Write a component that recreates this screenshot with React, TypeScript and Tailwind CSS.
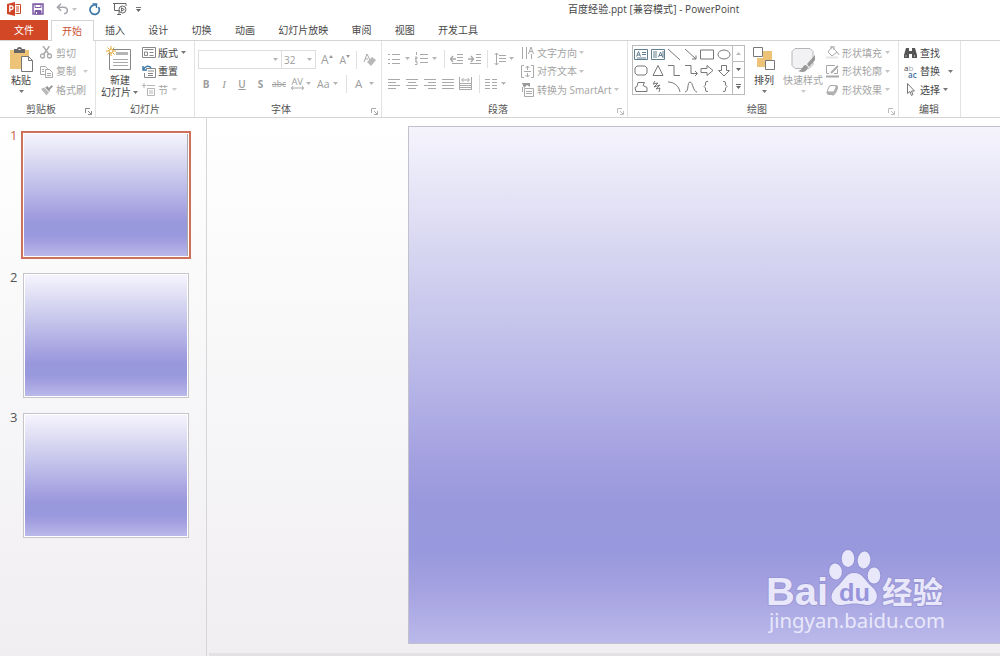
import type { ReactNode } from "react";
import clsx from "clsx";

interface childProps {
  children?: ReactNode;
  className?: string;
}
interface iconProps {
  w?: number;
  h?: number;
  color?: string;
  className?: string;
  children: ReactNode;
}
interface groupProps {
  label: string;
  className: string;
  labelClass?: string;
  launcher?: string;
  children: ReactNode;
}
interface rowProps {
  icon: ReactNode;
  label: string;
  className?: string;
  arrow?: string;
}

const GRAY = "#a9a9a9";
const DARK = "#555555";

const tabs = ["插入", "设计", "切换", "动画", "幻灯片放映", "审阅", "视图", "开发工具"];

function Icon({ w = 14, h = 14, color = GRAY, className, children }: iconProps) {
  return (
    <svg
      width={w}
      height={h}
      viewBox={`0 0 ${w} ${h}`}
      fill="none"
      stroke={color}
      strokeWidth={1}
      className={clsx("shrink-0", className)}
    >
      {children}
    </svg>
  );
}

function Arrow({ className = "text-[#b5b5b5]" }: childProps) {
  return (
    <svg width="5" height="3" viewBox="0 0 5 3" className={clsx("shrink-0", className)}>
      <path d="M0 0h5L2.500 3z" fill="currentColor" />
    </svg>
  );
}

function Sep({ className }: childProps) {
  return <div className={clsx("h-[18px] w-px shrink-0 bg-[#e0e0e0]", className)} />;
}

function Group({ label, className, labelClass, launcher, children }: groupProps) {
  return (
    <section className={clsx("flex shrink-0 flex-col", className)}>
      <div className="flex h-[61px] border-r border-[#e3e3e3]">{children}</div>
      <div className="flex h-[15px] items-center justify-between border-r border-[#e3e3e3]">
        <span className={clsx("leading-[15px] text-[#555]", labelClass)}>{label}</span>
        {launcher && (
          <Icon w={7} h={7} color={launcher} className="mr-[3px] mt-[3px]">
            <path d="M.5 5V.5H5M3 3l3 3M6.500 3v3.500H3" />
          </Icon>
        )}
      </div>
    </section>
  );
}

// one line of the three-line button columns
function Row({ icon, label, className = "text-[#a3a3a3]", arrow }: rowProps) {
  return (
    <div className={clsx("flex h-[18.600px] items-center whitespace-nowrap", className)}>
      <span className="flex w-4 shrink-0 items-center">{icon}</span>
      <span>{label}</span>
      {arrow && <Arrow className={arrow} />}
    </div>
  );
}

function Lines({ d }: { d: string }) {
  return (
    <Icon w={13} h={12}>
      <path d={d} />
    </Icon>
  );
}

function TitleBar() {
  return (
    <header className="flex h-5 items-center pb-[2px]">
      <Icon w={14} h={14} color="none" className="ml-[7px]">
        <path d="M0 2l8-2v14l-8-2z" fill="#cf4527" />
        <path d="M8.500 2.500h5v9h-5" stroke="#cf4527" />
        <path d="M9 5h3M9 7h3M9 9h3" stroke="#cf4527" />
        <path d="M2.800 10V4h1.500a1.700 1.700 0 010 3.500H3" stroke="#fff" strokeWidth="1.300" />
      </Icon>
      <Icon w={12} h={12} color="#7d5ba6" className="ml-[11px]">
        <path d="M1 1h10v10H1z" strokeWidth="1.500" />
        <path d="M3 1.500h6v3H3z" fill="#fff" />
        <path d="M3 7.500h6V11H3z" fill="#7d5ba6" />
        <path d="M4.500 9v2" stroke="#fff" />
      </Icon>
      <Icon w={13} h={12} color="#a6a6ae" className="ml-3">
        <path d="M5 .8L1.500 4.200 5 7.600M2 4.200h5.500c5 0 5 6.300.5 6.500" strokeWidth="1.600" />
      </Icon>
      <Arrow className="ml-[3px] text-[#c4c4c4]" />
      <Icon w={13} h={13} color="#3c77a8" className="ml-[11px]">
        <path d="M8 2.200A4.700 4.700 0 1010.500 4" strokeWidth="1.700" />
        <path d="M4.500 1h4v4" strokeWidth="1.400" />
      </Icon>
      <Icon w={15} h={14} color="#666" className="ml-3">
        <path d="M0 1.500h13M1.500 1.500v7h5M4 12.500h4M6 9v3.500M13 1.500V4" />
        <circle cx="9.500" cy="7.500" r="3.500" fill="#fff" />
        <path d="M8.500 5.800v3.400l2.800-1.700z" />
      </Icon>
      <div className="ml-[8px] flex flex-col items-center gap-px">
        <div className="h-px w-[5px] bg-[#777]" />
        <Arrow className="text-[#666]" />
      </div>
      <h1 className="ml-[427px] whitespace-nowrap text-[10px] tracking-[0.060px] text-[#444]">
        百度经验.ppt [兼容模式] - PowerPoint
      </h1>
    </header>
  );
}

function Tabs() {
  return (
    <nav className="flex h-[21px] border-b border-[#d5d5d5]">
      <div className="flex w-12 items-center justify-center bg-[#d24726] text-white">文件</div>
      <div className="ml-[3px] flex h-[21px] w-[43px] items-center justify-center border border-b-0 border-[#d5d5d5] bg-white pr-px text-[#c8502f]">
        开始
      </div>
      <div className="ml-[11px] flex items-center gap-[23.300px] text-[#484848]">
        {tabs.map((tab) => (
          <span key={tab} className="whitespace-nowrap">
            {tab}
          </span>
        ))}
      </div>
    </nav>
  );
}

function Clipboard() {
  return (
    <Group label="剪贴板" className="w-24" labelClass="ml-[26px]" launcher="#888">
      <div className="ml-[8px] flex w-[26px] flex-col items-center pt-[6px]">
        <Icon w={26} h={26} color="none">
          <path d="M2 3h19v19H2z" fill="#edc477" />
          <path d="M6 2h3a2.500 2 0 015 0h3v4H6z" fill="#666" />
          <path d="M10.500 2h2v1h-2z" fill="#fff" />
          <path d="M13.500 9.500h7l4 4v11h-11z" fill="#fff" stroke="#777" />
          <path d="M20.500 9.500v4h4" stroke="#777" />
        </Icon>
        <span className="leading-[15px] text-[#444]">粘贴</span>
        <Arrow className="mt-[2px] text-[#777]" />
      </div>
      <div className="ml-[6px] flex flex-col pt-[2.500px]">
        <Row
          label="剪切"
          icon={
            <Icon w={13} h={13}>
              <path d="M3 0l6 8.500M9.500 0l-6 8.500" strokeWidth="1.400" />
              <circle cx="2.500" cy="10" r="2" strokeWidth="1.300" />
              <circle cx="9.500" cy="10" r="2" strokeWidth="1.300" />
            </Icon>
          }
        />
        <Row
          label="复制"
          arrow="ml-[7px] text-[#ccc]"
          icon={
            <Icon w={13} h={13}>
              <path d="M.5 1.500h5l2 2v6h-7z" />
              <path d="M5.500 4.500h4l3 3v5h-7z" fill="#fff" />
              <path d="M2 4.500h2M2 6.500h2M7 8.500h4M7 10.500h4" />
            </Icon>
          }
        />
        <Row
          label="格式刷"
          icon={
            <Icon w={13} h={12} color="none">
              <path d="M1 5l3-1.500 5 5-2.500 3z" fill="#b9b9b9" />
              <path d="M5 3.500L7.500 2l1.500 2 2.500-3 1.500 1.500L10 5.500l-.5 2.500z" fill="#999" />
            </Icon>
          }
        />
      </div>
    </Group>
  );
}

function Slides() {
  return (
    <Group label="幻灯片" className="w-[99px]" labelClass="ml-[34px]">
      <div className="ml-[5px] flex w-10 flex-col pt-[5px]">
        <Icon w={27} h={26} color={DARK} className="ml-[5px]">
          <path d="M3.500 3.500h21v20h-21z" fill="#fff" stroke="#888" />
          <path d="M10 7.500h12" stroke="#b5b5b5" strokeWidth="3" />
          <path d="M7 13.500h15M7 16.500h15M7 19.500h15" stroke="#aaa" />
          <path d="M5 0v10M0 5h10M1.500 1.500l7 7M8.500 1.500l-7 7" stroke="#e5a93b" />
          <circle cx="5" cy="5" r="2" fill="#fff" stroke="#e5a93b" />
        </Icon>
        <span className="ml-[9px] mt-px leading-[14px] text-[#444]">新建</span>
        <div className="flex items-center whitespace-nowrap leading-[11px] text-[#444]">
          幻灯片
          <Arrow className="ml-[2px] text-[#777]" />
        </div>
      </div>
      <div className="ml-px flex flex-col pt-[2.500px]">
        <Row
          label="版式"
          className="text-[#444]"
          arrow="ml-[3px] text-[#777]"
          icon={
            <Icon w={14} h={13} color="#888">
              <path d="M.5 1.500h13v10H.5zM2.500 3.500h9M2.500 6h3v3.500h-3zM7.500 6.500h4M7.500 9.500h4" />
            </Icon>
          }
        />
        <Row
          label="重置"
          className="text-[#444]"
          icon={
            <Icon w={14} h={13} color="#888">
              <path d="M4 3.500h9.500v9h-11V8M6 6h6M6 8.500h5M6 10.500h5" />
              <path d="M1 1v4h4M1.500 4.500C2.500 1 7 0 9 3" stroke="#3c77a8" strokeWidth="1.400" />
            </Icon>
          }
        />
        <Row
          label="节"
          arrow="ml-[4px] text-[#ccc]"
          icon={
            <Icon w={14} h={13} color="#b5b5b5">
              <path d="M5 2.500h8M5.500 5.500h7v7h-7zM7 8h4M7 10h4M2 0v5M0 2.500h4" />
            </Icon>
          }
        />
      </div>
    </Group>
  );
}

function FontGroup() {
  return (
    <Group label="字体" className="w-[187px]" labelClass="ml-[76px]" launcher="#aaa">
      <div className="ml-[3px] flex flex-col pt-[9px] text-[#9d9d9d]">
        <div className="flex h-[19px] items-center">
          <div className="flex h-[19px] w-[84px] items-center justify-end border border-[#ddd] pr-[3px]">
            <Arrow />
          </div>
          <div className="-ml-px flex h-[19px] w-[35px] items-center justify-between border border-[#ddd] pl-[2px] pr-[3px] text-[10px]">
            32
            <Arrow />
          </div>
          <span className="ml-[5px] text-[12px]">A</span>
          <Icon w={5} h={12} color="none">
            <path d="M0 4l2-3 2 3z" fill="#999" />
          </Icon>
          <span className="ml-[6px] text-[10.500px]">A</span>
          <Icon w={5} h={12} color="none">
            <path d="M0 1h4L2 4z" fill="#999" />
          </Icon>
          <Sep className="ml-[5px]" />
          <Icon w={14} h={14} className="ml-[6px]">
            <path d="M1 9l3-8 3 6M2 6h3" />
            <path d="M4 9l5-5 4 3-5 6z" fill="#b8b8b8" stroke="none" />
          </Icon>
        </div>
        <div className="-ml-px mt-[5px] flex h-[19px] items-center">
          <span className="w-[18px] text-center font-bold">B</span>
          <span className="w-[18px] text-center font-['Liberation_Serif'] text-[11px] italic">I</span>
          <span className="w-[18px] text-center font-semibold underline">U</span>
          <span className="w-[19px] text-center font-bold">S</span>
          <span className="w-[18px] text-center text-[8.500px] line-through">abc</span>
          <span className="flex w-[18px] flex-col items-center text-[9.500px] leading-[9px] tracking-tight">
            AV
            <Icon w={13} h={4}>
              <path d="M0 2h13M2 0L.5 2 2 4M11 0l1.500 2L11 4" />
            </Icon>
          </span>
          <Arrow />
          <span className="ml-[6px] w-4 text-[10.500px]">Aa</span>
          <Arrow />
          <Sep className="ml-[8px]" />
          <span className="ml-[8px] w-[14px] text-[11.500px]">A</span>
          <Arrow />
        </div>
      </div>
    </Group>
  );
}

function Paragraph() {
  return (
    <Group label="段落" className="w-[246px]" labelClass="ml-[106px]" launcher="#bbb">
      <div className="ml-[6px] flex w-[133px] flex-col pt-[8px]">
        <div className="flex h-[19px] items-center">
          <Lines d="M4 1.500h8M4 6.500h8M4 10.500h8M0 1.500h2M0 6.500h2M0 10.500h2" />
          <Arrow className="ml-[4px] text-[#b5b5b5]" />
          <Icon w={13} h={13} className="ml-[5px]">
            <path d="M5 2.500h8M5 6.500h8M5 10.500h8M1.500 0v3M0 5h2v1.500H0V8h2M0 9.500h2v3H0" />
          </Icon>
          <Arrow className="ml-[4px] text-[#b5b5b5]" />
          <Sep className="ml-[7px]" />
          <Icon w={14} h={12} className="ml-[5px]">
            <path d="M7 1.500h6M7 4.500h6M7 7.500h6M2 10.500h11" />
            <path d="M0 6h6M3 3L.5 6 3 9" strokeWidth="1.400" />
          </Icon>
          <Icon w={14} h={12} className="ml-[4px]">
            <path d="M8 1.500h5M8 4.500h5M8 7.500h5M2 10.500h11" />
            <path d="M0 6h6M3 3l2.500 3L3 9" strokeWidth="1.400" />
          </Icon>
          <Sep className="ml-[5px]" />
          <Icon w={12} h={14} className="ml-[6px]">
            <path d="M5 3.500h7M5 6.500h7M5 9.500h7M2.500 1v12M.5 3l2-2 2 2M.5 11l2 2 2-2" />
          </Icon>
          <Arrow className="ml-[3px] text-[#b5b5b5]" />
        </div>
        <div className="mt-[6px] flex h-[19px] items-center">
          <div className="flex shrink-0 items-center gap-[5px]">
            <Lines d="M0 1.500h12M0 4.500h8M0 7.500h12M0 10.500h8" />
            <Lines d="M0 1.500h12M2 4.500h8M0 7.500h12M2 10.500h8" />
            <Lines d="M0 1.500h12M4 4.500h8M0 7.500h12M4 10.500h8" />
            <Lines d="M0 1.500h12M0 4.500h12M0 7.500h12M0 10.500h12" />
            <Icon w={14} h={14} className="-ml-px">
              <path d="M.5 0v13M12.500 0v13M3 3h7M4.500 1L2.500 3l2 2M8.500 1l2 2-2 2M1 6.500h12M1 8.500h12M1 10.500h12M1 12.500h12" />
            </Icon>
          </div>
          <Sep className="ml-[6px]" />
          <Icon w={12} h={12} className="ml-[5px]">
            <path d="M0 1.500h5M7 1.500h5M0 4.500h5M7 4.500h5M0 7.500h5M7 7.500h5M0 10.500h5M7 10.500h5" />
          </Icon>
          <Arrow className="ml-[4px] text-[#b5b5b5]" />
        </div>
      </div>
      <div className="flex flex-col pt-[2.500px]">
        <Row
          label="文字方向"
          arrow="ml-[2px] text-[#c4c4c4]"
          icon={
            <Icon w={14} h={13}>
              <path d="M1.500 1v12M5.500 1v12M10.500 8v5M7.500 8l2.500-7 2.500 7M8.500 5.500h3" />
            </Icon>
          }
        />
        <Row
          label="对齐文本"
          arrow="ml-[2px] text-[#c4c4c4]"
          icon={
            <Icon w={14} h={13}>
              <path d="M3 .5H.5v12H3M10 .5h2.500v12H10M3 6.500h7M6.500 1v4M4.500 3l2-2 2 2M6.500 8v4M4.500 10l2 2 2-2" />
            </Icon>
          }
        />
        <Row
          label="转换为 SmartArt"
          arrow="ml-[2px] text-[#c4c4c4]"
          icon={
            <Icon w={14} h={14}>
              <path d="M1 0h8v4l-3-2-3 3z" fill="#999" stroke="none" />
              <path d="M3.500 5.500h9v8h-9zM5 8.500h6M5 10.500h6M1.500 4v5" />
            </Icon>
          }
        />
      </div>
    </Group>
  );
}

const shapes = [
  "M.5 1.500h13v10H.5zM2.500 8.500l2-5 2 5M3 7h3M8 4.500h4M8 6.500h4M3 10h9",
  "M.5 1.500h13v10H.5zM3 3v7M5 3v7M7.500 9l2-5 2 5M8 7.500h3M12 3v7",
  "M1 1l12 11",
  "M1 1l11 10M12 7.500V11H8",
  "M.5 2h13v9H.5z",
  "M1 6.500a6 4.500 0 1012 0a6 4.500 0 10-12 0z",
  "M3 2h8l2 2v5l-2 2H3L1 9V4z",
  "M7 1.500L12 11.500H2z",
  "M1 1.500h6v10h6",
  "M1 1.500h6v8h6M11 7l2.500 2.500L11 12",
  "M1 4.500h6v-3l6 5-6 5v-3H1z",
  "M4.500 1.500h5v5h3L7 12 1.500 6.500h3z",
  "M2 11.500l-1-4 2-1 1-4h6.500L9 5.500l4 2v4z",
  "M4 1L2 4l5-1-4 4 6-2-4 4 4-1-1 4",
  "M1 2c6 0 11 4 12 10",
  "M1 12C5 12 3 2 6 2s3 10 7 10",
  "M8 1.500H7Q5.500 1.500 5.500 3V5L4 6.500 5.500 8v2Q5.500 11.500 7 11.500H8",
  "M6 1.500H7Q8.500 1.500 8.500 3V5L10 6.500 8.500 8v2Q8.500 11.500 7 11.500H6",
];

function Drawing() {
  return (
    <Group label="绘图" className="w-[271px]" labelClass="ml-[119px]" launcher="#bbb">
      <div className="ml-[4px] mt-[4px] flex h-[50px] w-[113px] shrink-0 border border-[#bbb]">
        <div className="grid w-[99px] grid-cols-6 grid-rows-3 place-items-center">
          {shapes.map((d, i) => (
            <Icon key={i} w={14} h={13} color={i < 2 ? "#62808f" : "#777"}>
              <path d={d} />
            </Icon>
          ))}
        </div>
        <div className="grid w-[12px] grid-rows-3 divide-y divide-[#bbb] border-l border-[#bbb]">
          <div className="grid place-items-center">
            <Arrow className="rotate-180 text-[#bbb]" />
          </div>
          <div className="grid place-items-center">
            <Arrow className="text-[#666]" />
          </div>
          <div className="flex flex-col items-center justify-center gap-px">
            <div className="h-px w-[5px] bg-[#666]" />
            <Arrow className="text-[#666]" />
          </div>
        </div>
      </div>
      <div className="ml-[7px] flex w-6 flex-col items-center pt-[6px]">
        <Icon w={23} h={24} color="#777">
          <path d="M10 4h9v9h-9zM4 11h9v9H4z" fill="#edc477" stroke="none" />
          <path d="M.5.5h9v9h-9zM12.500 13.500h9v9h-9z" fill="#fff" />
        </Icon>
        <span className="mt-[2px] leading-[15px] text-[#444]">排列</span>
        <Arrow className="mt-[2px] text-[#777]" />
      </div>
      <div className="ml-[6px] flex w-[42px] flex-col items-center whitespace-nowrap pt-[6px]">
        <Icon w={26} h={26} color="#b5b5b5">
          <path d="M5 1.500h15l3 3v13l-4 4H5l-3-3v-14z" fill="#f2f2f5" />
          <path d="M25 8l-8 9 2 3 6-7zM16 18c-4 0-3 5-8 6 5 2 9 1 10-4z" fill="#999" stroke="none" />
        </Icon>
        <span className="leading-[15px] text-[#a3a3a3]">快速样式</span>
        <Arrow className="mt-[2px] text-[#ccc]" />
      </div>
      <div className="ml-[2px] flex flex-col pt-[2.500px]">
        <Row
          label="形状填充"
          arrow="ml-[3px] text-[#c4c4c4]"
          icon={
            <Icon w={14} h={13}>
              <path d="M6 1L2 6l4 4 5-4zM5 3V0h3v4M11 6l2 3" />
              <path d="M0 11.500h12" stroke="#e5e5e5" strokeWidth="2" />
            </Icon>
          }
        />
        <Row
          label="形状轮廓"
          arrow="ml-[3px] text-[#c4c4c4]"
          icon={
            <Icon w={14} h={13}>
              <path d="M9 .5H.5v8H3M11.500 4v4.500H8" />
              <path d="M5 8l7-7" strokeWidth="2" />
              <path d="M0 11.500h13" strokeWidth="2" />
            </Icon>
          }
        />
        <Row
          label="形状效果"
          arrow="ml-[3px] text-[#c4c4c4]"
          icon={
            <Icon w={14} h={12}>
              <path d="M5 1.500h5q2 0 1.500 2.500T9 9.500t-3 1H3q-2.500 0-2-2.500z" fill="#b5b5b5" />
              <path d="M5 1.500h3.500q2 0 1.500 2L8.500 6.500q-.5 1.500-2 1.500H3q-2 0-1.500-1.500L3 3q.5-1.500 2-1.500z" fill="#fff" />
            </Icon>
          }
        />
      </div>
    </Group>
  );
}

function Editing() {
  return (
    <Group label="编辑" className="w-[62px]" labelClass="ml-[20px]">
      <div className="ml-[5px] flex flex-col pt-[2.500px]">
        <Row
          label="查找"
          className="text-[#444]"
          icon={
            <Icon w={13} h={12} color="none">
              <path d="M2 1h3v3h3V1h3l2 7v3H8V7H5v4H0V8z" fill="#555" />
              <path d="M2 8v2M10.500 8v2" stroke="#aaa" />
            </Icon>
          }
        />
        <Row
          label="替换"
          className="text-[#444]"
          arrow="ml-[8px] text-[#777]"
          icon={
            <span className="flex flex-col text-[8px] leading-[7px]">
              <span>
                a<span className="text-[#aaa]">b</span>
              </span>
              <span className="pl-1 font-semibold text-[#3c6f9a]">ac</span>
            </span>
          }
        />
        <Row
          label="选择"
          className="text-[#444]"
          arrow="ml-[3px] text-[#777]"
          icon={
            <Icon w={13} h={13} color="#777">
              <path d="M3.500.5v10l2.500-2 1.500 4 1.500-1-1.500-3.500h3z" fill="#fff" />
            </Icon>
          }
        />
      </div>
    </Group>
  );
}

function SlideFill({ className }: childProps) {
  return (
    <div
      className={clsx(
        "bg-[linear-gradient(180deg,#f5f4fd_0%,#e5e4f6_13%,#d2d1ef_28%,#b6b5e7_50%,#a4a1e0_64%,#9998dd_73%,#9798dd_82%,#a4a1e0_89%,#bab9ea_100%)]",
        className,
      )}
    />
  );
}

function Thumbnails() {
  return (
    <aside className="flex w-[207px] shrink-0 flex-col border-r border-[#d6d5d8] pt-[13px] text-[13px] leading-[8px] text-[#555]">
      <div className="flex h-[142px]">
        <span className="w-[21px] pl-[10px] text-[#c8654a]">1</span>
        <div className="h-[128px] w-[170px] border-2 border-[#d0705a] bg-white p-px">
          <SlideFill className="h-full w-full border-r border-[#aaa]" />
        </div>
      </div>
      {[2, 3].map((n) => (
        <div key={n} className="flex h-[140px]">
          <span className="w-[23px] pl-[10px]">{n}</span>
          <div className="h-[125px] w-[166px] border border-[#c6c5cc] bg-white p-px">
            <SlideFill className="h-full w-full" />
          </div>
        </div>
      ))}
    </aside>
  );
}

function Watermark() {
  return (
    <svg width="190" height="92" viewBox="0 0 190 92" fill="#e9e8fa" className="absolute bottom-[7px] right-[54px]">
      <g stroke="#8785c5" strokeOpacity=".4" strokeWidth="2" paintOrder="stroke">
        <ellipse cx="79.500" cy="26.500" rx="6.300" ry="8" transform="rotate(-8 79.500 26.500)" />
        <ellipse cx="92" cy="13.500" rx="6.300" ry="8.500" />
        <ellipse cx="108" cy="15" rx="6.300" ry="8.500" transform="rotate(8 108 15)" />
        <ellipse cx="118" cy="30.500" rx="6.300" ry="8" />
        <path d="M98 28c9 0 11 8 17 13 11 9 5 20-5 19-8-2-15-2-23 0-11 1-16-9-6-18 7-6 9-14 17-14z" />
        <text x="10" y="59.500" fontSize="38" fontWeight="700" textLength="62" lengthAdjust="spacingAndGlyphs" fontFamily="Liberation Sans, sans-serif">
          Bai
        </text>
        <text x="126" y="58" fontSize="30" fontWeight="700" textLength="61" lengthAdjust="spacingAndGlyphs" fontFamily="Noto Sans CJK SC, sans-serif">
          经验
        </text>
      </g>
      <text x="83" y="56" fontSize="23" fontWeight="700" fill="#9795dc" textLength="31" lengthAdjust="spacingAndGlyphs" fontFamily="Liberation Sans, sans-serif">
        du
      </text>
      <text x="13" y="83" fontSize="20" textLength="176" lengthAdjust="spacingAndGlyphs" fontFamily="Noto Sans, sans-serif">
        jingyan.baidu.com
      </text>
    </svg>
  );
}

export default function App() {
  return (
    <div className="flex h-[656px] w-[1000px] flex-col overflow-hidden bg-white font-['Open_Sans','Noto_Sans_CJK_SC',sans-serif] text-[10px] leading-[14px]">
      <TitleBar />
      <Tabs />
      <div className="flex h-[77px] shrink-0 border-b border-[#d5d5d5]">
        <Clipboard />
        <Slides />
        <FontGroup />
        <Paragraph />
        <Drawing />
        <Editing />
      </div>
      <main className="flex h-[538px] shrink-0 bg-linear-to-b from-white to-[#f0eef1]">
        <Thumbnails />
        <div className="ml-[2px] flex flex-1 flex-col justify-between">
          <div className="relative ml-[199px] mt-[8px] h-[518px]">
            <SlideFill className="h-full border border-r-0 border-[#c3c2cc]" />
            <Watermark />
          </div>
          <div className="h-[3px] bg-[#e2e1e3]" />
        </div>
      </main>
    </div>
  );
}
